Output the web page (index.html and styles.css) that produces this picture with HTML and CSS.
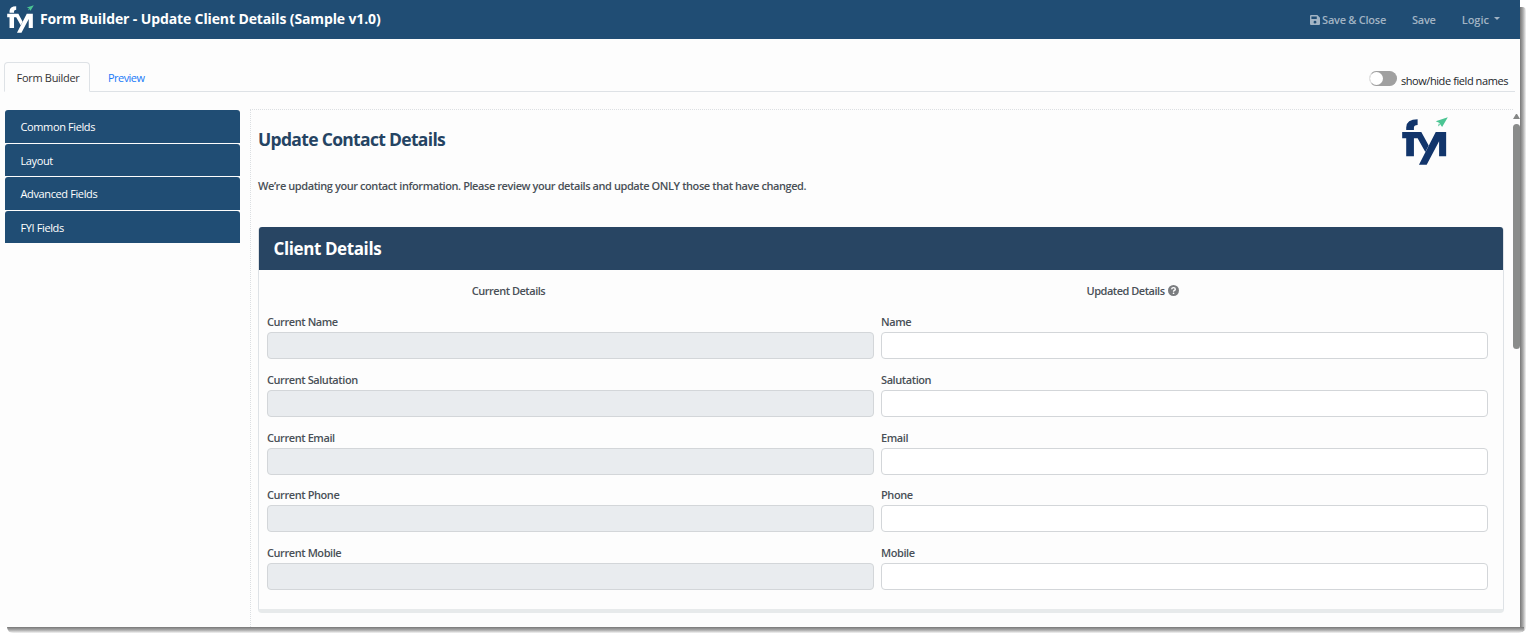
FILE: index.html
```
<!DOCTYPE html>
<html lang="en">
<head>
    <meta charset="UTF-8">
    <meta name="viewport" content="width=device-width, initial-scale=1.0">
    <title>Form Builder - Update Client Details</title>
    <link rel="stylesheet" href="styles.css">
</head>
<body>
    <svg width="0" height="0" class="sprite">
        <symbol id="logo" viewBox="0 0 136 143">
            <path fill="currentColor" d="M12 39V31Q13 7 46 7V24Q35 24 35 32V39Z"/>
            <path fill="currentColor" d="M0 45H57L79 85L69 104L46 63H35V117H12V63H0Z"/>
            <path fill="currentColor" d="M100 45H131V117H110V72L73 142H50Z"/>
            <path fill="#4bc593" d="M136 1L100 13L110 17L119 30ZM109 19L107 28L113 23Z"/>
        </symbol>
    </svg>

    <div class="window">
        <div class="header">
            <svg class="header-logo"><use href="#logo"/></svg>
            <div class="header-title">Form Builder - Update Client Details (Sample v1.0)</div>
            <div class="header-menu">
                <a><svg class="save-icon" viewBox="0 0 448 448"><path fill="currentColor" fill-rule="evenodd" d="M48 0H330L448 118V400Q448 448 400 448H48Q0 448 0 400V48Q0 0 48 0ZM64 64V176H304V64ZM224 256A64 64 0 1 0 224 384A64 64 0 1 0 224 256Z"/></svg><span>Save &amp; Close</span></a>
                <a>Save</a>
                <a class="logic">Logic<i class="caret"></i></a>
            </div>
        </div>

        <div class="tabs">
            <a class="tab active">Form Builder</a>
            <a class="tab tab-preview">Preview</a>
            <label class="toggle"><i class="switch"></i><span>show/hide field names</span></label>
        </div>

        <div class="main">
            <div class="sidebar">
                <a>Common Fields</a>
                <a>Layout</a>
                <a>Advanced Fields</a>
                <a>FYI Fields</a>
            </div>

            <div class="canvas">
                <div class="intro">
                    <div>
                        <h1>Update Contact Details</h1>
                        <p>We’re updating your contact information. Please review your details and update ONLY those that have changed.</p>
                    </div>
                    <svg class="form-logo"><use href="#logo"/></svg>
                </div>

                <div class="card">
                    <h2>Client Details</h2>
                    <div class="columns">
                        <div class="column">
                            <div class="column-title">Current Details</div>
                            <div class="field"><label>Current Name</label><input type="text" disabled></div>
                            <div class="field"><label>Current Salutation</label><input type="text" disabled></div>
                            <div class="field"><label>Current Email</label><input type="text" disabled></div>
                            <div class="field"><label>Current Phone</label><input type="text" disabled></div>
                            <div class="field"><label>Current Mobile</label><input type="text" disabled></div>
                        </div>
                        <div class="column">
                            <div class="column-title">Updated Details <svg class="help" viewBox="0 0 22 22"><circle cx="11" cy="11" r="11" fill="#7b7d80"/><path d="M7.3 8.6Q7.6 5.2 11 5.2Q14.6 5.2 14.6 8.3Q14.6 10 12.7 10.9Q11.1 11.7 11.1 13.4" fill="none" stroke="#fff" stroke-width="2.8"/><circle cx="11.1" cy="16.5" r="1.7" fill="#fff"/></svg></div>
                            <div class="field"><label>Name</label><input type="text"></div>
                            <div class="field"><label>Salutation</label><input type="text"></div>
                            <div class="field"><label>Email</label><input type="text"></div>
                            <div class="field"><label>Phone</label><input type="text"></div>
                            <div class="field"><label>Mobile</label><input type="text"></div>
                        </div>
                    </div>
                </div>
            </div>

            <div class="scrollbar">
                <i class="scroll-up"></i>
                <i class="scroll-thumb"></i>
            </div>
        </div>
        <div class="shadow-right"></div>
        <div class="shadow-bottom"></div>
    </div>
</body>
</html>
```

FILE: styles.css
```
* {
    box-sizing: border-box;
}

body {
    margin: 0;
    min-height: 639px;
    background-color: #fff;
    font-family: "Open Sans", "Noto Sans", sans-serif;
    font-size: 11px;
    letter-spacing: -0.42px;
    color: #212529;
}

.sprite {
    position: absolute;
}

.window {
    position: relative;
    display: flex;
    flex-direction: column;
    width: 1520px;
    height: 627px;
    background-color: #fdfdfd;
}

/* window shadow */
.shadow-right {
    position: absolute;
    left: 1520px;
    top: 7px;
    width: 6px;
    height: 625px;
    background: linear-gradient(to right, #777, #aaa 50%, #f4f4f4);
    border-radius: 0 4px 5px 0;
}

.shadow-bottom {
    position: absolute;
    left: 7px;
    top: 627px;
    width: 1517px;
    height: 6px;
    background: linear-gradient(to bottom, #777, #aaa 50%, #f4f4f4);
    border-radius: 0 0 5px 6px;
}

.header {
    display: flex;
    align-items: center;
    height: 39px;
    padding: 0 20px 0 7px;
    background-color: #204d74;
    color: white;
}

.header-logo {
    width: 27px;
    height: 28px;
    margin-top: -2px;
}

.header-title {
    margin-left: 6px;
    margin-top: -2px;
    font-size: 14px;
    letter-spacing: -0.12px;
    font-weight: 700;
    white-space: nowrap;
}

.header-menu {
    display: flex;
    margin-left: auto;
    font-weight: 600;
    letter-spacing: -0.25px;
    color: #a2b4c4;
}

.header-menu a {
    display: flex;
    align-items: center;
    margin-left: 26px;
}

.header-menu .logic {
    letter-spacing: 0;
}

.save-icon {
    width: 10px;
    height: 10px;
    margin-right: 2px;
}

.caret {
    margin-left: 5px;
    margin-top: -2px;
    border: 3.5px solid transparent;
    border-top-color: #a2b4c4;
    border-bottom: 0;
}

.tabs {
    display: flex;
    align-items: flex-end;
    height: 53px;
    margin: 0 5px 0 4px;
    border-bottom: 1px solid #dee2e6;
}

.tab {
    height: 29px;
    padding: 0 11px;
    line-height: 31px;
    white-space: nowrap;
    letter-spacing: -0.55px;
    color: #1a7af8;
}

.tab.active {
    width: 86px;
    margin-bottom: -1px;
    height: 30px;
    padding-left: 11.5px;
    border: 1px solid #dee2e6;
    border-bottom-color: #fdfdfd;
    border-radius: 4px 4px 0 0;
    line-height: 30px;
    letter-spacing: -0.3px;
    color: #333;
}

.tab-preview {
    padding-left: 18px;
}

.toggle {
    display: flex;
    align-items: center;
    margin-left: auto;
    margin-right: 7px;
    height: 21px;
}

.switch {
    display: flex;
    width: 28px;
    height: 15px;
    margin-right: 4px;
    margin-top: -4px;
    border: 1px solid #a0a0a0;
    border-left-color: #e4e4e4;
    border-radius: 8px;
    background-color: #a0a0a0;
}

.switch::before {
    content: "";
    width: 13px;
    height: 13px;
    border-radius: 50%;
    background-color: #fff;
}

.main {
    display: flex;
    flex: 1;
    min-height: 0;
    padding-left: 5px;
}

.sidebar {
    width: 235px;
    padding-top: 18px;
}

.sidebar a {
    display: block;
    height: 32.5px;
    margin-bottom: 1px;
    padding-left: 15.5px;
    border-radius: 3px 3px 0 0;
    background-color: #204d74;
    line-height: 33px;
    letter-spacing: -0.38px;
    color: white;
}

.canvas {
    width: 1263px;
    margin: 17px 0 0 10px;
    padding: 0 9px 0 7px;
    border-top: 1px dotted #dcdfe2;
    border-left: 1px dotted #dcdfe2;
}

.intro {
    display: flex;
    justify-content: space-between;
    height: 117px;
    padding-right: 56px;
}

.intro h1 {
    margin: 16px 0 0;
    font-size: 17.5px;
    line-height: 26px;
    letter-spacing: -0.68px;
    font-weight: 700;
    color: #254463;
}

.intro p {
    margin: 26px 0 0;
    line-height: 16px;
    font-weight: 600;
    color: #495057;
    white-space: nowrap;
}

.form-logo {
    width: 46px;
    height: 48px;
    margin-top: 7px;
    color: #12356b;
}

.card {
    width: 1246px;
    height: 386px;
    border: 1px solid #dee2e6;
    border-top: 0;
    border-bottom: 4px solid #e7eaeb;
    border-radius: 4px;
}

.card h2 {
    height: 43px;
    margin: 0;
    padding-left: 14.5px;
    border-radius: 3px 3px 0 0;
    background-color: #284563;
    line-height: 43px;
    font-size: 17px;
    font-weight: 700;
    letter-spacing: -0.4px;
    color: white;
}

.columns {
    display: flex;
    gap: 7px;
    padding: 12px 15px 0 8px;
    font-weight: 600;
    color: #495057;
}

.column {
    flex: 1;
}

.column-title {
    display: flex;
    justify-content: center;
    align-items: center;
    height: 16px;
    padding-right: 124px;
    margin-bottom: 16.4px;
    letter-spacing: -0.48px;
    white-space: nowrap;
}

.column:last-child .column-title {
    padding-right: 104px;
}

.help {
    width: 11px;
    height: 11px;
    margin-left: 3px;
}

.field {
    height: 57.6px;
}

.field label {
    display: block;
    height: 18px;
    line-height: 16px;
}

.field input {
    display: block;
    width: 100%;
    height: 27px;
    border: 1px solid #d3d6d9;
    border-radius: 4px;
    background-color: #fff;
}

.field input:disabled {
    background-color: #e9ecef;
}

.scrollbar {
    display: flex;
    flex-direction: column;
    width: 7px;
    padding-top: 22px;
}

.scroll-up {
    border: 3.5px solid transparent;
    border-top: 0;
    border-bottom: 5px solid #858786;
}

.scroll-thumb {
    height: 225px;
    margin-top: 5px;
    border-radius: 4px;
    background-color: #8a8c8b;
}
```
